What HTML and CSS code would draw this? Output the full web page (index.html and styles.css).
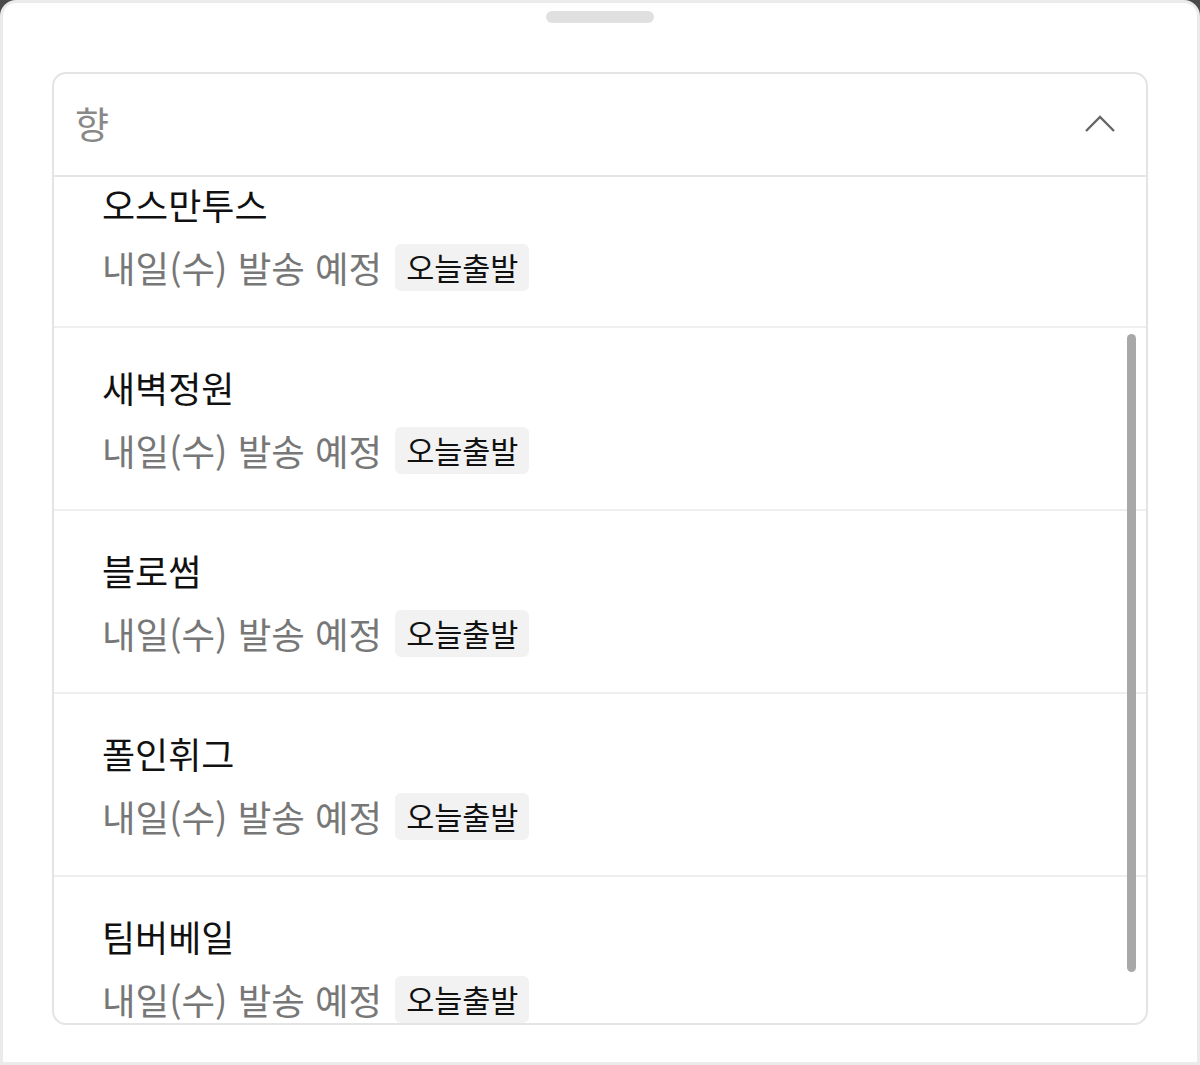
FILE: index.html
```html
<!DOCTYPE html>
<html lang="ko">
  <head>
    <meta charset="UTF-8" />
    <meta name="viewport" content="width=device-width, initial-scale=1.0" />
    <title>향 선택</title>
    <link rel="stylesheet" href="styles.css">
  </head>
  <body>
    <div class="sheet">
      <div class="handle"></div>

      <div class="select">
        <div class="select-head">
          <span class="select-label">향</span>
          <svg class="chevron" width="32" height="20" viewBox="0 0 32 20">
            <path d="M2 17 L16 3 L30 17" fill="none" stroke="#666" stroke-width="2.4" />
          </svg>
        </div>

        <div class="options">
          <div class="option-list">
            <div class="option">
              <div class="option-name">오스만투스</div>
              <div class="option-info">
                <span class="ship">내일(수) 발송 예정</span>
                <span class="badge">오늘출발</span>
              </div>
            </div>
            <div class="option">
              <div class="option-name">새벽정원</div>
              <div class="option-info">
                <span class="ship">내일(수) 발송 예정</span>
                <span class="badge">오늘출발</span>
              </div>
            </div>
            <div class="option">
              <div class="option-name">블로썸</div>
              <div class="option-info">
                <span class="ship">내일(수) 발송 예정</span>
                <span class="badge">오늘출발</span>
              </div>
            </div>
            <div class="option">
              <div class="option-name">폴인휘그</div>
              <div class="option-info">
                <span class="ship">내일(수) 발송 예정</span>
                <span class="badge">오늘출발</span>
              </div>
            </div>
            <div class="option">
              <div class="option-name">팀버베일</div>
              <div class="option-info">
                <span class="ship">내일(수) 발송 예정</span>
                <span class="badge">오늘출발</span>
              </div>
            </div>
          </div>
          <div class="scrollbar"></div>
        </div>
      </div>
    </div>
  </body>
</html>
```

FILE: styles.css
```css
*,
*::before,
*::after {
  box-sizing: border-box;
  margin: 0;
  padding: 0;
}

body {
  width: 1200px;
  height: 1065px;
  overflow: hidden;
  background-color: #4a4a4a;
  font-family: "Noto Sans CJK KR", "Noto Sans", sans-serif;
}

.sheet {
  height: 1065px;
  background-color: #fff;
  border: 3px solid #ebebeb;
  border-radius: 16px 16px 0 0;
  padding: 8px 49px 0;
}

.handle {
  width: 108px;
  height: 12px;
  margin: 0 auto;
  border-radius: 6px;
  background-color: #e0e0e0;
}

.select {
  margin-top: 49px;
  height: 953px;
  border: 2px solid #e4e4e4;
  border-radius: 14px;
  display: flex;
  flex-direction: column;
  overflow: hidden;
}

.select-head {
  flex: 0 0 103px;
  display: flex;
  align-items: center;
  justify-content: space-between;
  padding: 0 30px 4px 21px;
  border-bottom: 2px solid #e4e4e4;
}

.select-label {
  font-size: 37px;
  color: #888;
}

.chevron {
  margin-top: 2px;
}

.options {
  position: relative;
  flex: 1;
  overflow: hidden;
}

.option-list {
  margin-top: -32px;
}

.option {
  height: 183px;
  padding: 36px 0 0 48px;
  border-bottom: 2px solid #efefef;
}

.option-name {
  font-size: 36px;
  line-height: 46px;
  color: #111;
}

.option-info {
  margin-top: 17px;
  display: flex;
  align-items: center;
  gap: 13px;
}

.ship {
  font-size: 36.5px;
  line-height: 47px;
  color: #777;
}

.badge {
  height: 47px;
  line-height: 47px;
  padding: 0 11px;
  font-size: 30.5px;
  color: #111;
  background-color: #f2f2f2;
  border-radius: 6px;
}

.scrollbar {
  position: absolute;
  top: 157px;
  right: 10px;
  width: 9px;
  height: 638px;
  border-radius: 5px;
  background-color: #a8a8a8;
}
```
